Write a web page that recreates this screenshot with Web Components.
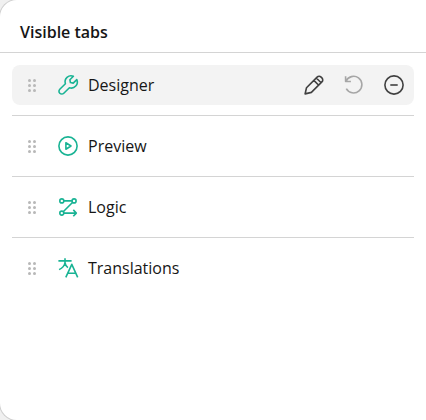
<!DOCTYPE html>
<html lang="en"><head><meta charset="utf-8"><title>Visible tabs</title>
<style>
html,body{margin:0;height:100%;overflow:hidden;background:#f0f0f0}
body{font-family:"Open Sans","Noto Sans",sans-serif;font-size:16px;line-height:24px;color:#161616}
</style></head><body>
<tabs-panel>
<span slot="title">Visible tabs</span>
<tab-row icon="wrench" selected>Designer</tab-row>
<tab-row icon="play">Preview</tab-row>
<tab-row icon="logic">Logic</tab-row>
<tab-row icon="translate">Translations</tab-row>
</tabs-panel>
<script>
const ICONS={
wrench:'<path d="M18.8 4.6 15.2 8.1 12.4 7.5 11.9 4.8 15.4 1.3A6 6 0 0 0 7.4 8.7L1.8 14.2A2.8 2.8 0 0 0 5.8 18.2L11.4 12.7A6 6 0 0 0 18.8 4.6Z"/>',
play:'<circle cx="10" cy="10" r="9.1"/><path d="M7.9 6.8v6.4L13 10Z"/>',
logic:'<circle cx="3.8" cy="3.9" r="2"/><circle cx="16.1" cy="3.9" r="2"/><circle cx="3.8" cy="16.1" r="2"/><path d="M5.8 3.9h8.3M14.7 5.3 5.2 14.7M5.8 16.1h12M15.3 12.9l3 3.2-3 3.2"/>',
translate:'<path d="M.4 2.9h13.2M7 .3V4.5C6.6 7.6 4.4 10 1.1 11.6M7 4.5C7.3 6.6 8.2 8.4 9.9 9.6M7.8 19.4 13.8 6.3 19.7 19.4M9.8 15.2h8"/>',
pencil:'<path d="M1.1 18.9 2.5 12.7 13.1 2.1A2.8 2.8 0 0 1 17.1 2.1L17.9 2.9A2.8 2.8 0 0 1 17.9 6.9L7.4 17.4ZM9.9 5.4l4.8 4.8M12.3 3l4.8 4.8"/>',
undo:'<path d="M1.6 1.2v5.3h5.3M2 6.3A8.3 8.3 0 1 1 2.3 13.6"/>',
minus:'<circle cx="10" cy="10" r="9.1"/><path d="M6.3 10h7.4"/>',
grip:'<g fill="currentColor" stroke="none"><circle cx="5.5" cy="5.5" r="1.5"/><circle cx="10.5" cy="5.5" r="1.5"/><circle cx="5.5" cy="10.5" r="1.5"/><circle cx="10.5" cy="10.5" r="1.5"/><circle cx="5.5" cy="15.5" r="1.5"/><circle cx="10.5" cy="15.5" r="1.5"/></g>'
};
class TabIcon extends HTMLElement{
connectedCallback(){
if(this.shadowRoot)return;
this.attachShadow({mode:'open'}).innerHTML=`<style>:host{display:block;width:20px;height:20px;flex:none}svg{display:block;overflow:visible}</style>
<svg width="20" height="20" viewBox="0 0 20 20" fill="none" stroke="currentColor" stroke-width="1.6" stroke-linejoin="round">${ICONS[this.getAttribute('name')]}</svg>`;
}}
customElements.define('tab-icon',TabIcon);
class TabRow extends HTMLElement{
connectedCallback(){
if(this.shadowRoot)return;
this.attachShadow({mode:'open'}).innerHTML=`<style>
:host{display:block;padding:10px 0;border-bottom:1px solid #d4d4d4}
:host(:last-of-type){border-bottom:0}
.row{display:flex;align-items:center;height:40px;box-sizing:border-box;border-radius:8px;padding:0 10px 0 12px}
:host([selected]) .row{background:#f3f3f3}
.grip{color:#b8b8b8}.lead{color:#19b394;margin:0 10px 0 14px}
.label{flex:1}
.actions{display:flex;gap:20px;color:#404040}
.off{color:#a6a6a6}
</style>
<div class="row"><tab-icon class="grip" name="grip"></tab-icon><tab-icon class="lead" name="${this.getAttribute('icon')}"></tab-icon><span class="label"><slot></slot></span>
${this.hasAttribute('selected')?'<div class="actions"><tab-icon name="pencil"></tab-icon><tab-icon class="off" name="undo"></tab-icon><tab-icon name="minus"></tab-icon></div>':''}</div>`;
}}
customElements.define('tab-row',TabRow);
class TabsPanel extends HTMLElement{
connectedCallback(){
if(this.shadowRoot)return;
this.attachShadow({mode:'open'}).innerHTML=`<style>
:host{display:block;box-sizing:border-box;height:422px;margin:-1px 0 0 -1px;background:#fff;border:1px solid #d0d0d0;border-right:0;border-radius:18px 0 0 18px}
header{height:52px;box-sizing:content-box;border-bottom:1px solid #d4d4d4;padding-left:20px;font-weight:600;line-height:64px}
.list{padding:2px 12px 0}
</style><header><slot name="title"></slot></header><div class="list"><slot></slot></div>`;
}}
customElements.define('tabs-panel',TabsPanel);
</script></body></html>
